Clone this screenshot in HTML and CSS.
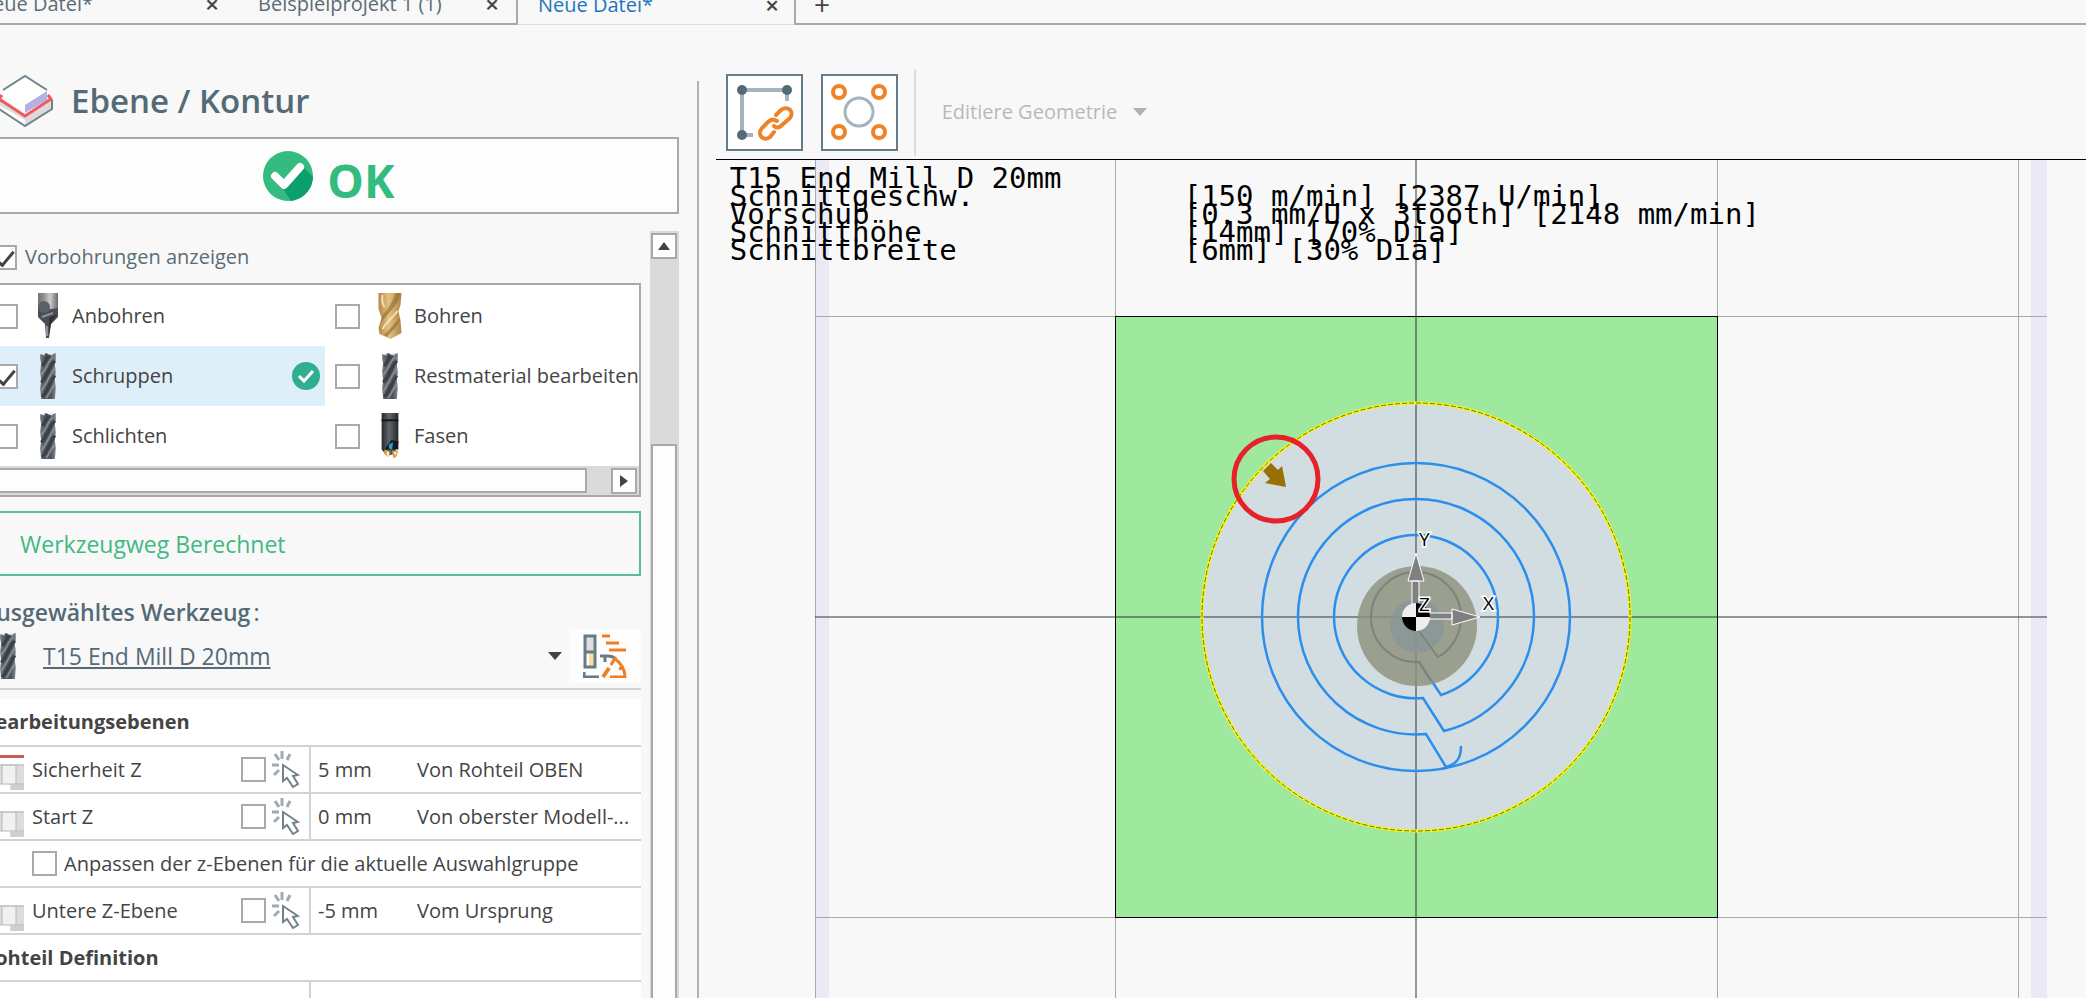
FILE: index.html
```html
<!DOCTYPE html>
<html lang="de">
<head>
<meta charset="utf-8">
<title>Ebene / Kontur</title>
<link rel="stylesheet" href="styles.css">
</head>
<body>
<svg class="defs" aria-hidden="true">
  <defs>
    <linearGradient id="steel"><stop offset="0" stop-color="#767b82"/><stop offset=".35" stop-color="#4b5057"/><stop offset=".7" stop-color="#50555d"/><stop offset="1" stop-color="#858a91"/></linearGradient>
    <linearGradient id="shank"><stop offset="0" stop-color="#77757a"/><stop offset=".25" stop-color="#8b898c"/><stop offset=".6" stop-color="#d0cccb"/><stop offset="1" stop-color="#69676b"/></linearGradient>
    <linearGradient id="gold"><stop offset="0" stop-color="#b28a4c"/><stop offset=".45" stop-color="#e3c284"/><stop offset="1" stop-color="#b08444"/></linearGradient>
    <linearGradient id="dark"><stop offset="0" stop-color="#26282b"/><stop offset=".45" stop-color="#62656a"/><stop offset="1" stop-color="#242629"/></linearGradient>
    <symbol id="mill" viewBox="0 0 18 47">
      <path fill="url(#steel)" d="M1 1l3 1 3-2 4 2 6-2v7l-1 5 1 8-1 8 1 8-1 11H2L1 36l1-8-1-9 1-8-1-5z"/>
      <path fill="none" stroke="#858b93" stroke-width="2" d="M2 22C7 18 8 10 14 4M2 39C7 33 11 22 16 15M7 46C10 43 12 36 16 32"/>
      <path fill="none" stroke="#3b4047" stroke-width="3" d="M3 13c3-3 3-6 7-10M2 30c5-5 8-15 14-22M3 45c5-5 9-16 13-22"/>
      <path fill="#dfe2e5" d="M3 0l3 0-1 3zM11 0l4 0-2 3z"/>
    </symbol>
    <symbol id="center-drill" viewBox="0 0 22 46">
      <path fill="url(#shank)" d="M1 0h20v17H1z"/>
      <path fill="#4a4d54" d="M1 15l6 2 14-2v9l-7 7-2 14h-3L8 31l-7-7z"/>
      <circle cx="7" cy="14" r="6" fill="#5c6068"/>
      <path fill="none" stroke="#8d9199" stroke-width="2" d="M5 24l11-4M10 33v10"/>
      <path fill="#2f3238" d="M12 25l8-4-6 10-2 10z"/>
    </symbol>
    <symbol id="drill" viewBox="0 0 23 46">
      <path fill="url(#gold)" d="M0 0h23l-1 12-2 6 2 10 1 12-11 6L1 41l-1-6 3-10-3-9z"/>
      <path fill="#8e692f" d="M22 0C20 12 8 22 2 30l2-8C9 16 15 8 17 0zM22 25C20 34 12 38 9 44l-4-2c5-4 11-12 17-17z" opacity=".6"/>
      <path fill="none" stroke="#f6dfaa" stroke-width="2" d="M4 2c-1 5 0 9 2 12M4 36C8 29 14 25 19 18"/>
    </symbol>
    <symbol id="chamfer" viewBox="0 0 18 44">
      <path fill="url(#dark)" d="M1 0h16v29l-3 5 1 5-9 2-5-6z"/>
      <path stroke="#17191b" stroke-width="2" d="M1 7h16"/>
      <path fill="#17191b" d="M4 35l6-9 7 1v8z"/>
      <path fill="#249ed2" d="M8 30l4-2-1 7-3-1z"/>
      <path fill="#d5a548" d="M4 35l5 2-1 5-5-3zM11 36l6 0-2 6-3 1z"/>
      <path stroke="#fff1c6" stroke-width="2" d="M7 37v4M13 38l2 1"/>
    </symbol>
    <symbol id="pick" viewBox="0 0 28 38">
      <g fill="none" stroke="#9eabb2" stroke-width="3"><path d="M10 0v8M3 3l4 6M18 3l-3 6M0 14h7M2 24l5-5"/></g>
      <path fill="#fff" stroke="#71828c" stroke-width="2" d="M11 14v16l4-3 6 9 5-3-5-8 5-1z"/>
    </symbol>
    <symbol id="level" viewBox="0 0 24 26">
      <path fill="#dcdcdc" d="M0 0h24v26H10v-6H0z"/>
      <path fill="#f1f1f1" d="M2 2h14v18H2z"/>
      <path fill="none" stroke="#b3babe" stroke-width="1" d="M0 1h24M0 20h24M2 1v19M16 1v19"/>
      <path fill="#cfcfcf" d="M11 21h13v5H11z"/>
    </symbol>
  </defs>
</svg>

<nav class="tabs">
  <div class="tab"><a href="#">Neue Datei*</a><button class="close" aria-label="Schließen">×</button></div>
  <div class="tab"><a href="#">Beispielprojekt 1 (1)</a><button class="close" aria-label="Schließen">×</button></div>
  <div class="tab tab-active"><a href="#">Neue Datei*</a><button class="close" aria-label="Schließen">×</button></div>
  <div class="tab-rest"><button class="add" aria-label="Neuer Tab">+</button></div>
</nav>

<main class="workspace">
  <aside class="sidebar">
    <header class="panel-head">
      <svg class="cube" viewBox="0 0 56 52">
        <path fill="#dcdada" d="M2 25l26 16 26-17v10L28 51 2 34z"/>
        <path fill="#fff" d="M6 16L28 1l22 15v12L28 42 5 28z"/>
        <path fill="#fff" d="M2 30l26 15v5L2 33z"/>
        <path fill="none" stroke="#70828c" stroke-width="2" d="M6 15L28 1l22 14M2 25v9l26 17 27-17v-9"/>
        <path fill="#b6afe4" d="M28 30l22-14v9L28 38z"/>
        <path fill="none" stroke="#ee5a60" stroke-width="3" d="M5 20l-3 4 26 17 26-17-3-4"/>
      </svg>
      <h1>Ebene / Kontur</h1>
    </header>
    <button class="ok">
      <svg class="ok-icon" viewBox="0 0 50 50"><circle cx="25" cy="25" r="25" fill="#34bb7f"/><path fill="#0b9f6c" d="M40 16l10 10a25 25 0 0 1-22 24l-8-12z"/><path fill="none" stroke="#fff" stroke-width="8" stroke-linecap="round" stroke-linejoin="round" d="M12 25l9 9 16-18"/></svg>
      <span>OK</span>
    </button>
    <div class="scroll-area">
      <div class="content">
        <label class="predrill"><input type="checkbox" checked><span>Vorbohrungen anzeigen</span></label>
        <section class="steps">
          <div class="steps-grid">
            <label class="step"><input type="checkbox"><svg class="tool"><use href="#center-drill"/></svg><span>Anbohren</span></label>
            <label class="step"><input type="checkbox"><svg class="tool"><use href="#drill"/></svg><span>Bohren</span></label>
            <label class="step step-active"><input type="checkbox" checked><svg class="tool"><use href="#mill"/></svg><span>Schruppen</span>
              <svg class="done" viewBox="0 0 28 28"><circle cx="14" cy="14" r="14" fill="#2fae90"/><path fill="none" stroke="#fff" stroke-width="3" d="M7 14l5 5 9-10"/></svg></label>
            <label class="step"><input type="checkbox"><svg class="tool"><use href="#mill"/></svg><span>Restmaterial bearbeiten</span></label>
            <label class="step"><input type="checkbox"><svg class="tool"><use href="#mill"/></svg><span>Schlichten</span></label>
            <label class="step"><input type="checkbox"><svg class="tool"><use href="#chamfer"/></svg><span>Fasen</span></label>
          </div>
          <div class="hscroll"><div class="hthumb"></div><button class="arrow" aria-label="Rechts"><svg viewBox="0 0 8 12"><path d="M0 0l8 6-8 6z"/></svg></button></div>
        </section>
        <button class="calculated">Werkzeugweg Berechnet</button>
        <h2>Ausgewähltes Werkzeug<span>:</span></h2>
        <div class="tool-row">
          <svg class="tool"><use href="#mill"/></svg>
          <a href="#">T15 End Mill D 20mm</a>
          <button class="drop" aria-label="Werkzeug wählen"><svg viewBox="0 0 14 8"><path d="M0 0h14l-7 8z"/></svg></button>
          <button class="speeds" aria-label="Schnittwerte">
            <svg viewBox="0 0 44 44"><path fill="#dedede" d="M2 2h9v16H2z"/><path fill="#fddd9a" d="M6 19h5v14H6z"/><g fill="none" stroke="#647b88" stroke-width="3"><path d="M2 2h10v31H2zM2 18h10M1 38v5h15M17 22h7c4 0 7 1 9 3M22 22v6"/></g><g fill="none" stroke="#ef7f26" stroke-width="3"><path d="M19 2h8M23 9h13M26 16h17M31 24c7 5 11 11 11 19H27M32 24l-4 7M41 33l-5 2"/><path stroke-width="4" d="M20 43l6-9"/></g></svg>
          </button>
        </div>
        <table class="props">
          <colgroup><col class="c-name"><col class="c-val"><col></colgroup>
          <tbody>
            <tr><th colspan="3">Bearbeitungsebenen</th></tr>
            <tr><td><div class="cell"><svg class="lvl lvl-safe"><use href="#level"/></svg><label for="z1">Sicherheit Z</label><input id="z1" type="checkbox"><svg class="pick"><use href="#pick"/></svg></div></td><td class="val">5 mm</td><td>Von Rohteil OBEN</td></tr>
            <tr><td><div class="cell"><svg class="lvl"><use href="#level"/></svg><label for="z2">Start Z</label><input id="z2" type="checkbox"><svg class="pick"><use href="#pick"/></svg></div></td><td class="val">0 mm</td><td>Von oberster Modell-...</td></tr>
            <tr><td colspan="3"><label class="adapt"><input type="checkbox"><span>Anpassen der z-Ebenen für die aktuelle Auswahlgruppe</span></label></td></tr>
            <tr><td><div class="cell"><svg class="lvl"><use href="#level"/></svg><label for="z3">Untere Z-Ebene</label><input id="z3" type="checkbox"><svg class="pick"><use href="#pick"/></svg></div></td><td class="val">-5 mm</td><td>Vom Ursprung</td></tr>
            <tr><th colspan="3">Rohteil Definition</th></tr>
            <tr><td></td><td class="val"></td><td></td></tr>
          </tbody>
        </table>
      </div>
      <div class="vscroll"><button class="arrow" aria-label="Hoch"><svg viewBox="0 0 12 8"><path d="M0 8l6-8 6 8z"/></svg></button><div class="vthumb"></div></div>
    </div>
  </aside>
  <div class="divider"></div>

  <section class="stage">
    <div class="toolbar">
      <button class="tb" aria-label="Kontur verketten">
        <svg viewBox="0 0 73 73"><g fill="none" stroke="#a5b3bc" stroke-width="4"><path d="M14 14h45v11M14 14v45h11"/></g><g fill="#546a77"><circle cx="14" cy="14" r="5"/><circle cx="59" cy="14" r="5"/><circle cx="14" cy="59" r="5"/></g>
          <g fill="none" stroke="#ef8326" stroke-width="4" stroke-linecap="round"><path d="M48 39l5-5c6-5 14 1 9 8l-8 7c-3 3-6 3-8 1"/><path d="M49 45c-3-2-6-2-9 1l-6 6c-6 7 2 14 8 9l4-5"/></g></svg>
      </button>
      <button class="tb" aria-label="Kreise wählen">
        <svg viewBox="0 0 73 73"><circle cx="36" cy="36" r="14" fill="none" stroke="#a5b3bc" stroke-width="3"/><g fill="none" stroke="#ef8326" stroke-width="4"><circle cx="16" cy="16" r="6"/><circle cx="56" cy="16" r="6"/><circle cx="16" cy="56" r="6"/><circle cx="56" cy="56" r="6"/></g></svg>
      </button>
      <span class="sep"></span>
      <button class="edit" disabled>Editiere Geometrie<svg viewBox="0 0 14 8"><path d="M0 0h14l-7 8z"/></svg></button>
    </div>
    <div class="canvas">
      <svg class="drawing">
        <g transform="translate(700 457)">
          <path fill="#eae9f6" d="M-601-457h14V600h-14zM615-457h16V600h-16z"/>
          <path fill="#9fe99f" d="M-301-301h602v601h-602z"/>
          <circle r="214" fill="#d2dde2"/>
          <path fill="none" stroke="#a9a9a9" stroke-width="1" shape-rendering="crispEdges" d="M-601-457V600M-301-457V600M301-457V600M602-457V600M-601-301H631M-601 300H631"/>
          <path fill="none" stroke="#000" stroke-width="1" shape-rendering="crispEdges" d="M-301-301h602v601h-602z"/>
          <path fill="none" stroke="#222" stroke-opacity=".45" stroke-width="2" shape-rendering="crispEdges" d="M0-457V600M-601 0H631"/>
          <circle r="214" fill="none" stroke="#f6f615" stroke-width="3"/>
          <circle r="214" fill="none" stroke="#50500c" stroke-width="1" stroke-opacity=".8" stroke-dasharray="5 2"/>
          <g fill="none" stroke="#2c8eec" stroke-width="2.5">
            <circle r="154"/>
            <path d="M30 150L10 117A118 118 0 0 1-118 0A118 118 0 0 1 0-118A118 118 0 0 1 118 0A118 118 0 0 1 28 114L7 81A82 82 0 0 1-82 0A82 82 0 0 1 0-82A82 82 0 0 1 82 0A82 82 0 0 1 25 78L3 45"/>
            <path d="M30 150C41 147 45 141 45 129"/>
          </g>
          <circle cy="9" cx="1" r="60" fill="#8d907c" fill-opacity=".8"/>
          <circle cy="9" cx="1" r="27" fill="#87949a" fill-opacity=".75"/>
          <path fill="none" stroke="#7b8678" stroke-width="2" d="M2 13l20 27A45 45 0 0 0 45 0A45 45 0 0 0 0-45A45 45 0 0 0-45 0A45 45 0 0 0 3 45L15 64"/>
          <g fill="#808080" stroke="#fff" stroke-width="1"><path d="M-4-12v-24h7v24zM12-4h24v6H12zM0-64l8 28H-8zM64 0L36 8V-8z"/></g>
          <circle r="14" fill="#eee"/><path d="M0 0v-14a14 14 0 0 1 14 14zM0 0v14a14 14 0 0 1-14-14z"/>
          <g class="axis"><text x="3" y="-6">Z</text><text x="3" y="-71">Y</text><text x="67" y="-7">X</text></g>
          <path fill="#997006" d="M-153-146l8-8 7 7 4-4 4 21-21-4 5-4z"/>
          <circle cx="-140" cy="-138" r="42" fill="none" stroke="#e72129" stroke-width="5"/>
        </g>
      </svg>
      <dl class="readout">
        <dt>T15 End Mill D 20mm</dt><dd></dd>
        <dt>Schnittgeschw.</dt><dd>[150 m/min] [2387 U/min]</dd>
        <dt>Vorschub</dt><dd>[0.3 mm/U x 3tooth] [2148 mm/min]</dd>
        <dt>Schnitthöhe</dt><dd>[14mm] [70% Dia]</dd>
        <dt>Schnittbreite</dt><dd>[6mm] [30% Dia]</dd>
      </dl>
    </div>
  </section>
</main>
</body>
</html>
```
FILE: styles.css
```css
* { box-sizing: border-box; }
body {
  margin: 0;
  height: 100vh;
  overflow: hidden;
  display: flex;
  flex-direction: column;
  background: #f8f8f8;
  color: #444;
  font: 20px/28px "Open Sans", "Noto Sans", sans-serif;
}
button { font: inherit; color: inherit; padding: 0; border: 0; background: none; border-radius: 0; }
a { color: inherit; text-decoration: none; }
svg { display: block; flex: none; }
.defs { position: absolute; width: 0; height: 0; }

input[type="checkbox"] {
  appearance: none;
  flex: none;
  width: 25px;
  height: 25px;
  margin: 0;
  border: 2px solid #a9a9a9;
  background: #fff;
}
input[type="checkbox"]:checked { display: grid; place-items: center; }
input[type="checkbox"]:checked::before {
  content: "";
  width: 8px;
  height: 16px;
  margin-bottom: 6px;
  border: solid #444;
  border-width: 0 3px 3px 0;
  transform: rotate(40deg);
}

/* Tabs */
.tabs { display: flex; flex: none; height: 40px; margin: -15px 0 0 -44px; color: #5b6c76; }
.tab {
  flex: 0 0 280px;
  display: flex;
  align-items: center;
  justify-content: space-between;
  padding: 0 16px 0 22px;
  border-bottom: 2px solid #a9a9a9;
}
.tab-active { padding: 0 14px 0 20px; color: #1c75bc; border: solid #a9a9a9; border-width: 0 2px; box-shadow: inset 0 -1px #ddd; }
.tab-rest { flex: 1; display: flex; padding: 0 16px; border-bottom: 2px solid #a9a9a9; }
.close { width: 16px; font-size: 24px; font-weight: 600; color: #444; }
.add { width: 20px; font-size: 28px; color: #444; }

.workspace { flex: 1; min-height: 0; display: flex; margin-top: 44px; }

/* Sidebar */
.sidebar { flex: 0 0 720px; margin-left: -25px; padding-right: 18px; display: flex; flex-direction: column; min-height: 0; }
.divider { flex: 0 0 2px; margin-top: 12px; background: #b3b3b3; }
.panel-head { flex: none; height: 68px; padding: 0 0 4px 22px; display: flex; align-items: center; gap: 18px; }
.cube { width: 56px; height: 52px; }
h1 { margin: 0; font-size: 33px; line-height: 40px; font-weight: 600; color: #546a77; }
.ok {
  flex: none;
  height: 77px;
  padding-left: 4px;
  display: flex;
  align-items: center;
  justify-content: center;
  gap: 14px;
  border: 2px solid #a9a9a9;
  background: #fdfdfd;
  color: #34bb7f;
  font-size: 46px;
  font-weight: 700;
}
.ok-icon { width: 50px; height: 50px; }
.ok span { padding-top: 8px; }
.scroll-area { flex: 1; min-height: 0; display: flex; gap: 9px; margin-top: 17px; overflow: hidden; }
.content { flex: 1; min-width: 0; }
.predrill { height: 52px; padding-left: 17px; display: flex; align-items: center; gap: 8px; color: #5b6c76; }
.steps { border: 2px solid #a9a9a9; background: #fff; }
.steps-grid { display: grid; grid-template-columns: 348px 1fr; padding-top: 1px; }
.step { height: 60px; padding-left: 16px; display: flex; align-items: center; white-space: nowrap; }
.step:nth-child(even) { padding-left: 10px; }
.step-active { background: #dfeff9; }
.tool { width: 24px; height: 46px; }
.step .tool { margin: 0 12px 0 18px; }
.done { width: 28px; height: 28px; margin: 0 5px 0 auto; }
.hscroll { height: 29px; padding: 2px; display: flex; justify-content: space-between; gap: 24px; background: #dadada; }
.hthumb { flex: 1; border: 2px solid #a9a9a9; background: #fdfdfd; }
.arrow { flex: none; width: 26px; height: 26px; display: grid; place-items: center; border: 2px solid #a9a9a9; background: #fff; fill: #444; }
.hscroll svg { width: 8px; height: 12px; }
.calculated {
  width: 100%;
  height: 65px;
  margin-top: 14px;
  padding-left: 43px;
  display: block;
  text-align: left;
  border: 2px solid #5bbd92;
  color: #42b883;
  font-size: 23px;
}
h2 { margin: 0; padding: 20px 0 0 6px; font-size: 23px; line-height: 33px; font-weight: 600; color: #546a77; }
h2 span { font-weight: 400; padding-left: 3px; }
.tool-row { height: 61px; padding: 0 0 5px 21px; display: flex; align-items: center; border-bottom: 2px solid #d3d3d3; }
.tool-row a { margin-left: 23px; font-size: 23px; color: #546a77; text-decoration: underline; }
.drop { margin-left: auto; width: 14px; fill: #444; }
.speeds { width: 72px; height: 54px; margin-left: 7px; display: grid; place-items: center; background: #fdfdfd; }
.speeds svg { width: 44px; height: 44px; }
.props { width: 100%; margin-top: 9px; border-collapse: collapse; table-layout: fixed; background: #fff; }
.c-name { width: 335px; }
.c-val { width: 107px; }
.props th, .props td { height: 47px; padding: 0; border-bottom: 2px solid #d3d3d3; text-align: left; white-space: nowrap; }
.props th { padding-left: 7px; font-weight: 700; }
.props .val { padding-left: 7px; border-left: 2px solid #d3d3d3; }
.cell { display: flex; align-items: center; padding-left: 25px; }
.cell label { flex: 1; padding-left: 8px; }
.lvl { width: 24px; height: 26px; margin-top: 15px; }
.lvl-safe { border-top: 3px solid #cc5b5b; height: 35px; margin-top: 6px; padding-top: 6px; }
.pick { width: 28px; height: 38px; margin: 0 9px 0 6px; }
.adapt { display: flex; align-items: center; gap: 7px; padding-left: 57px; }
.vscroll { flex: 0 0 29px; display: flex; flex-direction: column; align-items: center; padding-top: 2px; background: #dadada; }
.vscroll svg { width: 12px; height: 8px; }
.vthumb { flex: 1; width: 26px; margin-top: 185px; border: 2px solid #a9a9a9; border-bottom: 0; background: #fdfdfd; }

/* Stage */
.stage { flex: 1; min-width: 0; margin-left: 18px; display: flex; flex-direction: column; }
.toolbar { flex: none; height: 90px; padding: 0 0 4px 10px; display: flex; align-items: center; }
.tb { width: 77px; height: 77px; margin-right: 18px; border: 2px solid #647b88; background: #fff; }
.tb svg { width: 73px; height: 73px; }
.sep { width: 2px; height: 87px; margin: 0 26px 0 -2px; background: #ddd; }
.edit { display: flex; align-items: center; gap: 16px; color: #b9b9b9; fill: #b0b0b0; }
.drop svg, .edit svg { width: 14px; height: 8px; }
.canvas { position: relative; flex: 1; min-height: 0; border-top: 1px solid #000; overflow: hidden; }
.drawing { position: absolute; inset: 0; width: 100%; height: 100%; }
.axis { font: 19px "Open Sans", sans-serif; fill: #000; stroke: #fff; stroke-width: 3px; paint-order: stroke; }
.readout {
  position: relative;
  margin: 0;
  padding: 9px 14px;
  display: grid;
  grid-template-columns: 454px 1fr;
  grid-auto-rows: 18px;
  font: 29px/18px "DejaVu Sans Mono", monospace;
  color: #000;
  white-space: nowrap;
}
.readout dd { margin: 0; }

.sidebar { flex-basis: 721px; }
.divider + .stage { margin-left: 17px; }
```
